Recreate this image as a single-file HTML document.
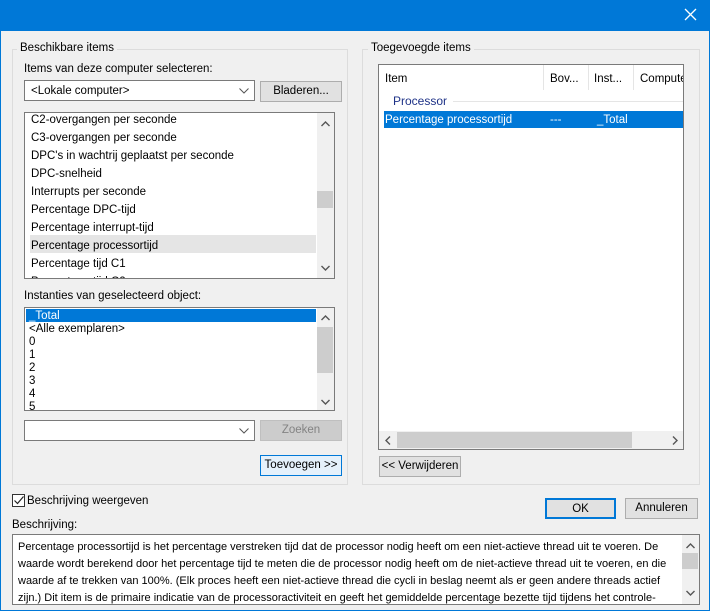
<!DOCTYPE html>
<html><head><meta charset="utf-8"><style>
*{box-sizing:border-box;margin:0;padding:0}
body{width:710px;height:611px;overflow:hidden;background:#f0f0f0;font-family:"Liberation Sans",sans-serif;font-size:11.5px;color:#000;position:relative}
.a{position:absolute;white-space:nowrap}
.box{position:absolute;background:#fff;border:1px solid #7a7a7a;overflow:hidden}
.grp{position:absolute;border:1px solid #dcdcdc}
.lbl{position:absolute;background:#f0f0f0;padding:0 3px;white-space:nowrap}
.btn{position:absolute;background:#e1e1e1;border:1px solid #adadad;text-align:center;line-height:19px}
.sb{position:absolute;background:#f0f0f0}
</style></head><body>
<div class="a" style="left:0;top:0;width:710px;height:31px;background:#0078d7"></div>
<div class="a" style="left:0;top:0;width:1px;height:611px;background:#0078d7"></div>
<div class="a" style="right:0;top:0;width:1px;height:611px;background:#0078d7"></div>
<div class="a" style="left:0;bottom:0;width:710px;height:1px;background:#0078d7"></div>
<svg class="a" style="left:684px;top:8px" width="13" height="13"><path d="M1 1L12 12M12 1L1 12" stroke="#fff" stroke-width="1.3"/></svg>

<div class="grp" style="left:12px;top:49px;width:336px;height:436px"></div>
<div class="lbl" style="left:17px;top:42px">Beschikbare items</div>
<div class="a" style="left:24px;top:63px">Items van deze computer selecteren:</div>
<div class="box" style="left:24px;top:80px;width:231px;height:21px"><span class="a" style="left:6px;top:4px">&lt;Lokale computer&gt;</span><svg class="a" style="left:214px;top:7px" width="10" height="6"><path d="M0.5 0.5L5 5L9.5 0.5" fill="none" stroke="#555"/></svg></div>
<div class="btn" style="left:260px;top:81px;width:82px;height:21px">Bladeren...</div>

<div class="box" style="left:24px;top:112px;width:311px;height:167px">
<div class="a" style="left:5px;top:122px;width:286px;height:18px;background:#e5e5e5"></div>
<div class="a" style="left:6px;top:-2px;line-height:18px">C2-overgangen per seconde<br>C3-overgangen per seconde<br>DPC's in wachtrij geplaatst per seconde<br>DPC-snelheid<br>Interrupts per seconde<br>Percentage DPC-tijd<br>Percentage interrupt-tijd<br>Percentage processortijd<br>Percentage tijd C1<br>Percentage tijd C2</div>
<div class="sb" style="left:292px;top:0;width:17px;height:165px"></div>
<div class="a" style="left:292px;top:78px;width:16px;height:17px;background:#cdcdcd"></div>
<svg class="a" style="left:296px;top:8px" width="9" height="6"><path d="M0.5 5L4.5 1L8.5 5" fill="none" stroke="#555" stroke-width="1.4"/></svg>
<svg class="a" style="left:296px;top:152px" width="9" height="6"><path d="M0.5 1L4.5 5L8.5 1" fill="none" stroke="#555" stroke-width="1.4"/></svg>
</div>

<div class="a" style="left:24px;top:290px">Instanties van geselecteerd object:</div>
<div class="box" style="left:24px;top:307px;width:311px;height:104px">
<div class="a" style="left:1px;top:1px;width:290px;height:13px;background:#0078d7"></div>
<div class="a" style="left:4px;top:2px;line-height:13px">
<span style="color:#fff">_Total</span><br>&lt;Alle exemplaren&gt;<br>0<br>1<br>2<br>3<br>4<br>5</div>
<div class="sb" style="left:292px;top:0;width:17px;height:102px"></div>
<div class="a" style="left:292px;top:19px;width:16px;height:46px;background:#cdcdcd"></div>
<svg class="a" style="left:296px;top:7px" width="9" height="6"><path d="M0.5 5L4.5 1L8.5 5" fill="none" stroke="#555" stroke-width="1.4"/></svg>
<svg class="a" style="left:296px;top:91px" width="9" height="6"><path d="M0.5 1L4.5 5L8.5 1" fill="none" stroke="#555" stroke-width="1.4"/></svg>
</div>
<div class="box" style="left:24px;top:420px;width:231px;height:21px"><svg class="a" style="left:214px;top:7px" width="10" height="6"><path d="M0.5 0.5L5 5L9.5 0.5" fill="none" stroke="#555"/></svg></div>
<div class="btn" style="left:260px;top:420px;width:82px;height:21px;background:#cccccc;border-color:#bfbfbf;color:#838383">Zoeken</div>
<div class="btn" style="left:260px;top:455px;width:82px;height:21px;background:#e5f1fb;border-color:#0078d7">Toevoegen &gt;&gt;</div>

<div class="grp" style="left:362px;top:49px;width:338px;height:436px"></div>
<div class="lbl" style="left:368px;top:42px">Toegevoegde items</div>
<div class="box" style="left:378px;top:64px;width:306px;height:386px">
<div class="a" style="left:164px;top:0;width:1px;height:25px;background:#e5e5e5"></div>
<div class="a" style="left:209px;top:0;width:1px;height:25px;background:#e5e5e5"></div>
<div class="a" style="left:254px;top:0;width:1px;height:25px;background:#e5e5e5"></div>
<div class="a" style="left:6px;top:8px">Item</div>
<div class="a" style="left:171px;top:8px">Bov...</div>
<div class="a" style="left:215px;top:8px">Inst...</div>
<div class="a" style="left:261px;top:8px">Compute</div>
<div class="a" style="left:14px;top:29px;color:#1e3287;font-size:12px">Processor</div>
<div class="a" style="left:74px;top:36px;width:230px;height:1px;background:#e5e5e5"></div>
<div class="a" style="left:5px;top:46px;width:299px;height:17px;background:#0078d7"></div>
<div class="a" style="left:6px;top:49px;color:#fff">Percentage processortijd</div>
<div class="a" style="left:171px;top:49px;color:#fff">---</div>
<div class="a" style="left:218px;top:49px;color:#fff">_Total</div>
<div class="sb" style="left:0;top:366px;width:304px;height:18px"></div>
<div class="a" style="left:18px;top:367px;width:235px;height:16px;background:#cdcdcd"></div>
<svg class="a" style="left:6px;top:371px" width="6" height="9"><path d="M5 0.5L1 4.5L5 8.5" fill="none" stroke="#555" stroke-width="1.4"/></svg>
<svg class="a" style="left:293px;top:371px" width="6" height="9"><path d="M1 0.5L5 4.5L1 8.5" fill="none" stroke="#555" stroke-width="1.4"/></svg>
</div>
<div class="btn" style="left:379px;top:456px;width:82px;height:21px">&lt;&lt; Verwijderen</div>

<div class="a" style="left:12px;top:494px;width:13px;height:13px;border:1px solid #333;background:#fff"></div>
<svg class="a" style="left:14px;top:496px" width="10" height="9"><path d="M0.5 4.5L3.5 7.5L9.5 0.5" fill="none" stroke="#222" stroke-width="1.2"/></svg>
<div class="a" style="left:27px;top:495px">Beschrijving weergeven</div>
<div class="btn" style="left:545px;top:498px;width:71px;height:21px;border:2px solid #0078d7;line-height:18px">OK</div>
<div class="btn" style="left:625px;top:498px;width:73px;height:21px">Annuleren</div>

<div class="a" style="left:12px;top:519px">Beschrijving:</div>
<div class="box" style="left:12px;top:534px;width:688px;height:71px">
<div class="a" style="left:5px;top:4px;line-height:17px;white-space:normal;width:660px;font-size:11px">Percentage processortijd is het percentage verstreken tijd dat de processor nodig heeft om een niet-actieve thread uit te voeren. De waarde wordt berekend door het percentage tijd te meten die de processor nodig heeft om de niet-actieve thread uit te voeren, en die waarde af te trekken van 100%. (Elk proces heeft een niet-actieve thread die cycli in beslag neemt als er geen andere threads actief zijn.) Dit item is de primaire indicatie van de processoractiviteit en geeft het gemiddelde percentage bezette tijd tijdens het controle-interval weer. Over het algemeen</div>
<div class="sb" style="left:669px;top:0;width:17px;height:69px"></div>
<div class="a" style="left:669px;top:18px;width:16px;height:16px;background:#cdcdcd"></div>
<svg class="a" style="left:673px;top:8px" width="9" height="6"><path d="M0.5 5L4.5 1L8.5 5" fill="none" stroke="#555" stroke-width="1.4"/></svg>
<svg class="a" style="left:673px;top:55px" width="9" height="6"><path d="M0.5 1L4.5 5L8.5 1" fill="none" stroke="#555" stroke-width="1.4"/></svg>
</div>
</body></html>
